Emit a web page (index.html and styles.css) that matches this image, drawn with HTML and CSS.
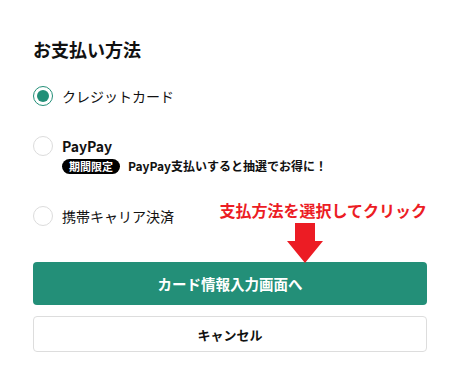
FILE: index.html
```html
<!DOCTYPE html>
<html lang="ja">
<head>
  <meta charset="UTF-8">
  <title>お支払い方法</title>
  <link rel="stylesheet" href="styles.css">
</head>
<body>

  <div class="panel">
    <h2 class="title">お支払い方法</h2>

    <div class="options">
      <label class="option">
        <span class="radio checked"></span>
        <span class="label">クレジットカード</span>
      </label>

      <label class="option paypay">
        <span class="radio"></span>
        <span class="label-group">
          <span class="label bold">PayPay</span>
          <span class="promo">
            <span class="badge">期間限定</span>
            <span class="promo-text">PayPay支払いすると抽選でお得に！</span>
          </span>
        </span>
      </label>

      <label class="option carrier">
        <span class="radio"></span>
        <span class="label">携帯キャリア決済</span>
      </label>
    </div>

    <div class="buttons">
      <button class="btn primary">カード情報入力画面へ</button>
      <button class="btn cancel">キャンセル</button>
    </div>

    <!-- annotation overlay -->
    <div class="note">支払方法を選択してクリック</div>
    <svg class="arrow" width="36" height="41" viewBox="0 0 36 41">
      <path d="M8 0 H28 V18 H36 L18 40 L0 18 H8 Z" fill="#ec1c24"/>
    </svg>
  </div>

</body>
</html>
```

FILE: styles.css
```css
body {
  margin: 0;
  background: #fff;
  font-family: "Noto Sans CJK JP", "Noto Sans", sans-serif;
  color: #111;
}
.panel {
  position: relative;
  width: 394px;
  margin-left: 33px;
  padding-top: 37px;
}
.title {
  margin: 0;
  font-size: 18px;
  line-height: 24px;
  font-weight: bold;
}
.options {
  display: flex;
  flex-direction: column;
  margin-top: 25px;
}
.option {
  display: flex;
  align-items: flex-start;
  gap: 9px;
}
.option.paypay {
  margin-top: 30px;
}
.option.carrier {
  margin-top: 32px;
}
.radio {
  box-sizing: border-box;
  width: 20px;
  height: 20px;
  border: 1.5px solid #dcdcdc;
  border-radius: 50%;
  flex-shrink: 0;
  display: flex;
  align-items: center;
  justify-content: center;
}
.radio.checked {
  border-color: #238f78;
}
.radio.checked::after {
  content: "";
  width: 12px;
  height: 12px;
  border-radius: 50%;
  background: #238f78;
}
.label {
  font-size: 14px;
  line-height: 20px;
}
.label.bold {
  font-weight: bold;
}
.label-group {
  display: flex;
  flex-direction: column;
  gap: 2px;
}
.promo {
  display: flex;
  align-items: center;
  gap: 8px;
}
.badge {
  background: #000;
  color: #fff;
  font-size: 11px;
  font-weight: bold;
  line-height: 15px;
  padding: 0 7px;
  border-radius: 8px;
}
.promo-text {
  font-size: 12px;
  font-weight: bold;
  line-height: 16px;
}
.buttons {
  display: flex;
  flex-direction: column;
  gap: 11px;
  margin-top: 36px;
}
.btn {
  box-sizing: border-box;
  width: 100%;
  font-family: inherit;
  font-weight: bold;
  border-radius: 4px;
  cursor: pointer;
}
.btn.primary {
  height: 43px;
  background: #238f78;
  border: none;
  color: #fff;
  font-size: 14.5px;
}
.btn.cancel {
  height: 36px;
  background: #fff;
  border: 1px solid #dddddd;
  color: #111;
  font-size: 13px;
}
.note {
  position: absolute;
  right: 0;
  top: 200px;
  color: #ec1c24;
  font-size: 16px;
  font-weight: bold;
  line-height: 20px;
}
.arrow {
  position: absolute;
  left: 254px;
  top: 223px;
}
```
